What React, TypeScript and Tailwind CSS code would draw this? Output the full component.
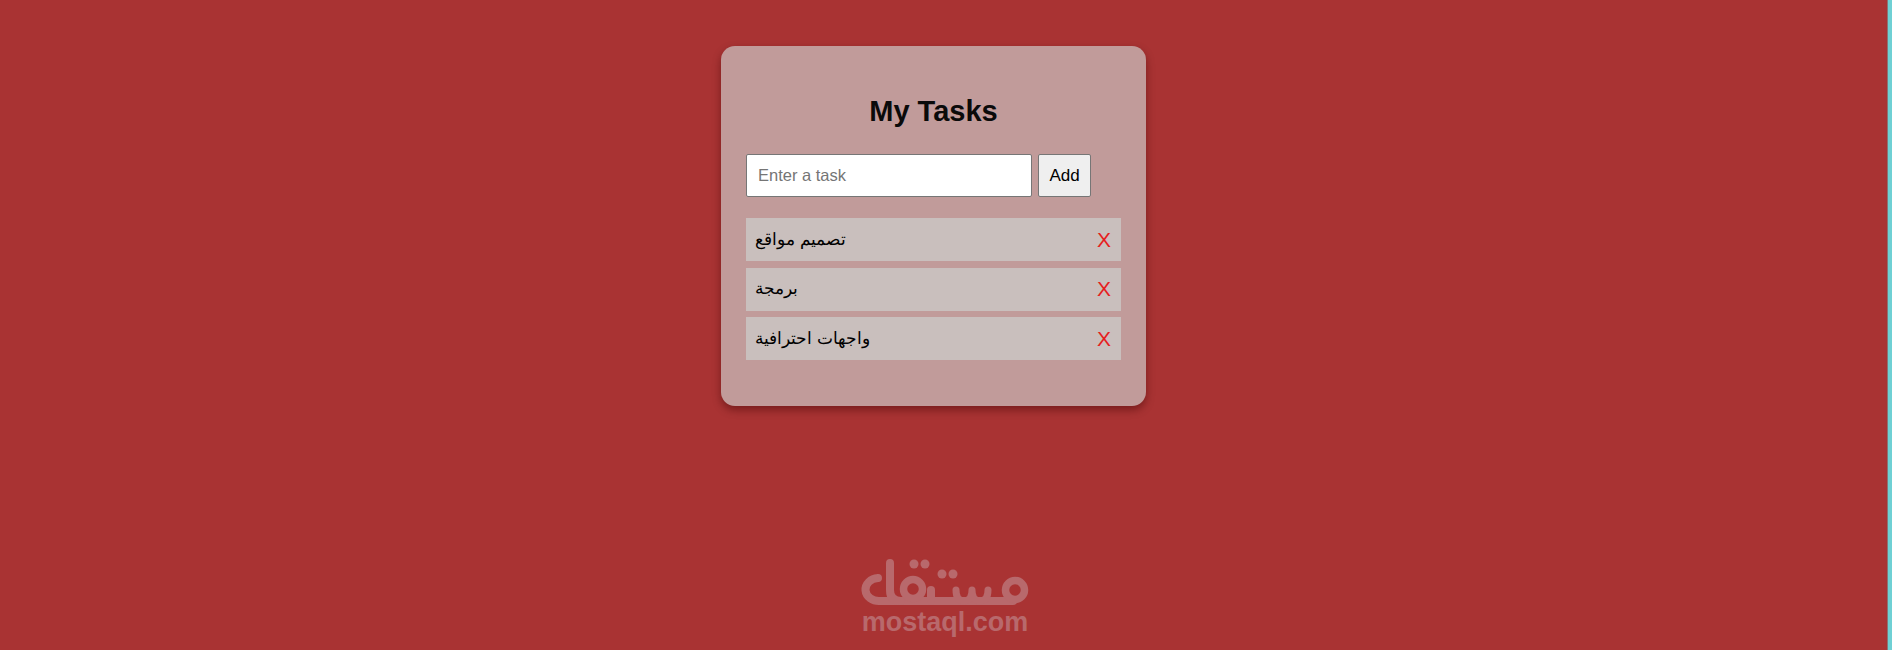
const tasks = ['تصميم مواقع', 'برمجة', 'واجهات احترافية']

function MostaqlLogo() {
  return (
    <svg width="180" height="55" viewBox="855 555 180 55" fill="none" stroke="#b8696c" strokeWidth="8" strokeLinecap="round" strokeLinejoin="round">
      {/* lam */}
      <path d="M878 578 A 13.5 11.5 0 0 0 880 601 H1013" />
      <path d="M890 563 V590 Q890 601 901 601" />
      {/* qaf */}
      <circle cx="913" cy="589" r="9.5" strokeWidth="7.5" />
      {/* teeth */}
      <path d="M931 590 V601" />
      <path d="M956 590 Q956 601 964 601 Q972 601 972 590 Q972 601 980 601 Q988 601 988 590" strokeWidth="7" />
      {/* mim */}
      <circle cx="1015" cy="590" r="9.5" strokeWidth="7.5" />
      <g fill="#b8696c" stroke="none">
        <circle cx="914" cy="564" r="4.5" />
        <circle cx="925" cy="564" r="4.5" />
        <circle cx="942" cy="574" r="4.5" />
        <circle cx="953" cy="574" r="4.5" />
      </g>
    </svg>
  )
}

export default function App() {
  return (
    <div className="relative flex h-[650px] overflow-hidden bg-[#a93333] font-['Liberation_Sans',Arial,sans-serif]">
      <main className="flex-1 border-r border-[#8a7474]">
        <section className="mt-[46px] ml-[721px] h-[360px] w-[425px] rounded-[14px] bg-[#c19b9a] px-[25px] pt-[47px] shadow-[0_4px_8px_rgba(60,0,0,0.45)]">
          <h1 className="text-center text-[29px] leading-[37px] font-bold text-[#0a0a0a]">My Tasks</h1>

          <div className="mt-[24px] flex gap-[6px]">
            <input
              className="h-[43px] w-[286px] rounded-[2px] border border-[#767676] bg-white px-[11px] text-[16.5px] text-black outline-none placeholder:text-[#757575]"
              placeholder="Enter a task"
              type="text"
            />
            <button className="h-[43px] w-[53px] rounded-[2px] border border-[#767676] bg-[#efefef] text-[17px] text-black" type="button">
              Add
            </button>
          </div>

          <ul className="mt-[21px] flex flex-col gap-[6.5px]">
            {tasks.map((task) => (
              <li className="flex h-[43px] items-center justify-between bg-[#c9bfbd] pr-[10px] pl-[9px] text-[17px] text-black" key={task}>
                <span>{task}</span>
                <span className="text-[21px] text-[#e61e1e]">X</span>
              </li>
            ))}
          </ul>
        </section>
      </main>
      <div className="w-[4px] bg-[#6fd0d4]" />

      <div className="absolute top-[555px] left-[855px] flex w-[180px] flex-col items-center">
        <MostaqlLogo />
        <span className="mt-[-3px] text-[27px] leading-[30px] font-bold text-[#b8696c]">mostaql.com</span>
      </div>
    </div>
  )
}
